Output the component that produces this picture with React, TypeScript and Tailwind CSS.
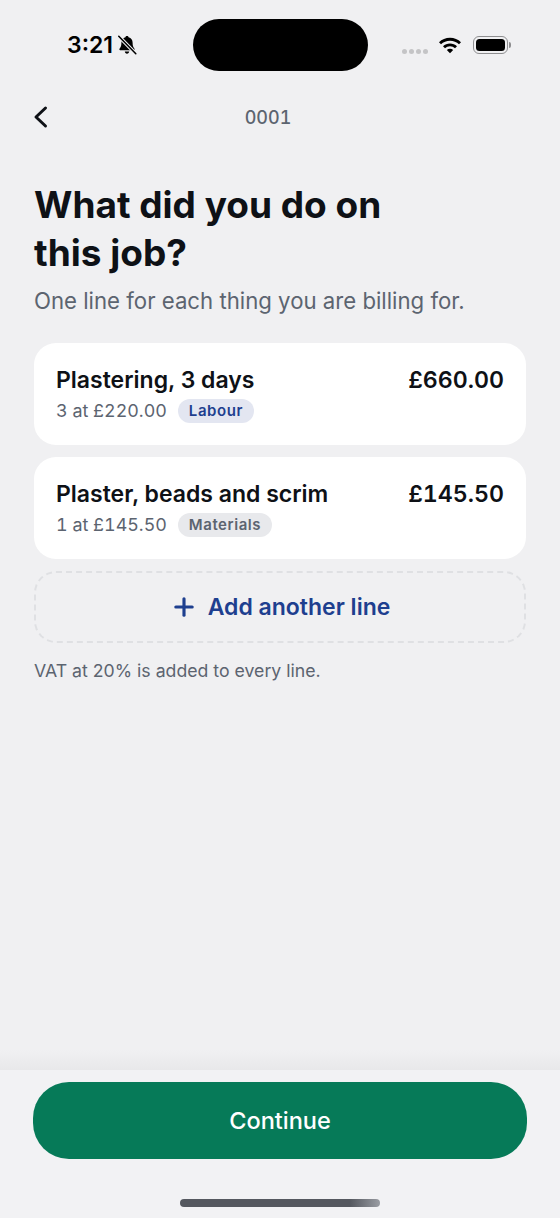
import { Plus } from "lucide-react";

function SilentBell() {
  return (
    <svg width="22" height="22" viewBox="0 0 20 20" className="ml-[3px]">
      <path
        d="M10 1.800c.8 0 1.300.5 1.400 1.200 2.400.6 3.700 2.500 3.700 5 0 2.800.5 4 1.700 5.500.4.5.1 1.200-.6 1.200H3.800c-.7 0-1-.7-.6-1.200C4.400 12 4.900 10.800 4.900 8c0-2.500 1.300-4.400 3.700-5 .1-.7.6-1.200 1.400-1.200zM8 16h4c0 1.100-.9 1.900-2 1.900S8 17.100 8 16z"
        fill="#000"
      />
      <path d="M2.500 2 18 18" stroke="#f0f0f2" strokeWidth="3.200" />
      <path d="M2.500 2 18 18" stroke="#000" strokeWidth="1.400" strokeLinecap="round" />
    </svg>
  );
}

function StatusBar() {
  return (
    <div className="relative flex h-[90px] shrink-0 items-start justify-between pl-[67px] pr-[49px] pt-[30px]">
      <div className="flex h-[30px] items-center">
        <span className="text-[23px] font-semibold leading-[30px] text-black">3:21</span>
        <SilentBell />
      </div>
      <div className="absolute left-[193px] top-[19px] h-[52px] w-[175px] rounded-full bg-black" />
      <div className="flex h-[30px] items-center">
        <div className="mt-[12px] flex gap-[2px]">
          <span className="size-[5px] rounded-full bg-[#c4c4c6]" />
          <span className="size-[5px] rounded-full bg-[#c4c4c6]" />
          <span className="size-[5px] rounded-full bg-[#c4c4c6]" />
          <span className="size-[5px] rounded-full bg-[#c4c4c6]" />
        </div>
        <svg width="24" height="18" viewBox="0 0 24 18" className="ml-[10px]">
          <path d="M1 6.200C3.900 3.400 7.700 1.800 12 1.800s8.100 1.600 11 4.400l-2 2.100C18.600 6 15.500 4.700 12 4.700S5.400 6 3 8.300z" fill="#000" />
          <path d="M5 10.200c1.900-1.800 4.300-2.800 7-2.800s5.100 1 7 2.800l-2 2.100c-1.300-1.300-3.100-2-5-2s-3.700.7-5 2z" fill="#000" />
          <path d="M8.800 14c.9-.8 2-1.200 3.200-1.200s2.300.4 3.200 1.200L12 17.300z" fill="#000" />
        </svg>
        <div className="ml-[11px] flex items-center">
          <div className="flex h-[18px] w-[35px] rounded-[6px] border border-[#8e8e90] p-[2px]">
            <div className="h-full w-full rounded-[3.500px] bg-black" />
          </div>
          <div className="ml-[1px] h-[6px] w-[2px] rounded-r-full bg-[#8e8e90]" />
        </div>
      </div>
    </div>
  );
}

function LineCard({
  title,
  price,
  qty,
  tag,
  tagClass,
}: {
  title: string;
  price: string;
  qty: string;
  tag: string;
  tagClass: string;
}) {
  return (
    <div className="flex h-[102px] items-start justify-between rounded-[22px] bg-white px-[22px] pt-[22px]">
      <div>
        <div className="text-[23px] font-semibold leading-[30px] text-[#0e1116]">{title}</div>
        <div className="mt-[4px] flex items-center gap-[11px]">
          <span className="text-[17.900px] leading-[24px] tabular-nums text-[#5c6470]">{qty}</span>
          <span className={`flex h-[24px] items-center rounded-full px-[11px] text-[15px] font-semibold tracking-[0.55px] ${tagClass}`}>
            {tag}
          </span>
        </div>
      </div>
      <div className="text-[23.200px] font-semibold leading-[30px] tabular-nums text-[#0e1116]">{price}</div>
    </div>
  );
}

export default function App() {
  return (
    <div className="flex h-[1218px] w-[560px] flex-col overflow-hidden bg-[#f0f0f2] font-['Inter',sans-serif]">
      <StatusBar />
      <div className="relative flex h-[54px] shrink-0 items-center justify-center">
        <svg width="16" height="24" viewBox="0 0 16 24" className="absolute left-[33px] top-[15px]" fill="none">
          <path d="M12.500 3 3 12l9.500 9" stroke="#0e1116" strokeWidth="3" strokeLinecap="round" strokeLinejoin="round" />
        </svg>
        <span className="mr-[24px] text-[18px] font-medium tabular-nums text-[#5c6470]">0001</span>
      </div>
      <div className="flex flex-1 flex-col px-[34px] pt-[37px]">
        <h1 className="text-[37px] font-bold leading-[48px] text-[#0e1116]">
          What did you do on
          <br />
          this job?
        </h1>
        <p className="mt-[9px] text-[22.200px] leading-[30px] text-[#5c6470]">One line for each thing you are billing for.</p>
        <div className="mt-[27px] flex flex-col gap-[12px]">
          <LineCard title="Plastering, 3 days" price="£660.00" qty="3 at £220.00" tag="Labour" tagClass="bg-[#e3e6f1] text-[#1e3f8f]" />
          <LineCard title="Plaster, beads and scrim" price="£145.50" qty="1 at £145.50" tag="Materials" tagClass="bg-[#e8e9ec] text-[#5c6470]" />
          <div className="flex h-[72px] items-center justify-center gap-[10px] rounded-[22px] border-2 border-dashed border-[#dfe0e3]">
            <Plus size={28} strokeWidth={2.7} className="text-[#1e3f8f]" />
            <span className="text-[23px] font-semibold text-[#1e3f8f]">Add another line</span>
          </div>
        </div>
        <p className="mt-[16px] text-[17.700px] leading-[24px] text-[#5c6470]">VAT at 20% is added to every line.</p>
      </div>
      <div className="h-[20px] bg-gradient-to-b from-transparent to-[#e8e8ea]" />
      <div className="flex h-[148px] shrink-0 flex-col items-center bg-[#f2f2f4] px-[33px] pt-[12px]">
        <button className="flex h-[77px] w-full items-center justify-center rounded-[36px] bg-[#067a58] pt-[1px] text-[23.500px] font-medium text-white">
          Continue
        </button>
        <div className="mt-[40px] h-[8px] w-[200px] rounded-full bg-gradient-to-r from-[#55585f] from-85% to-[#9a9da3]" />
      </div>
    </div>
  );
}
